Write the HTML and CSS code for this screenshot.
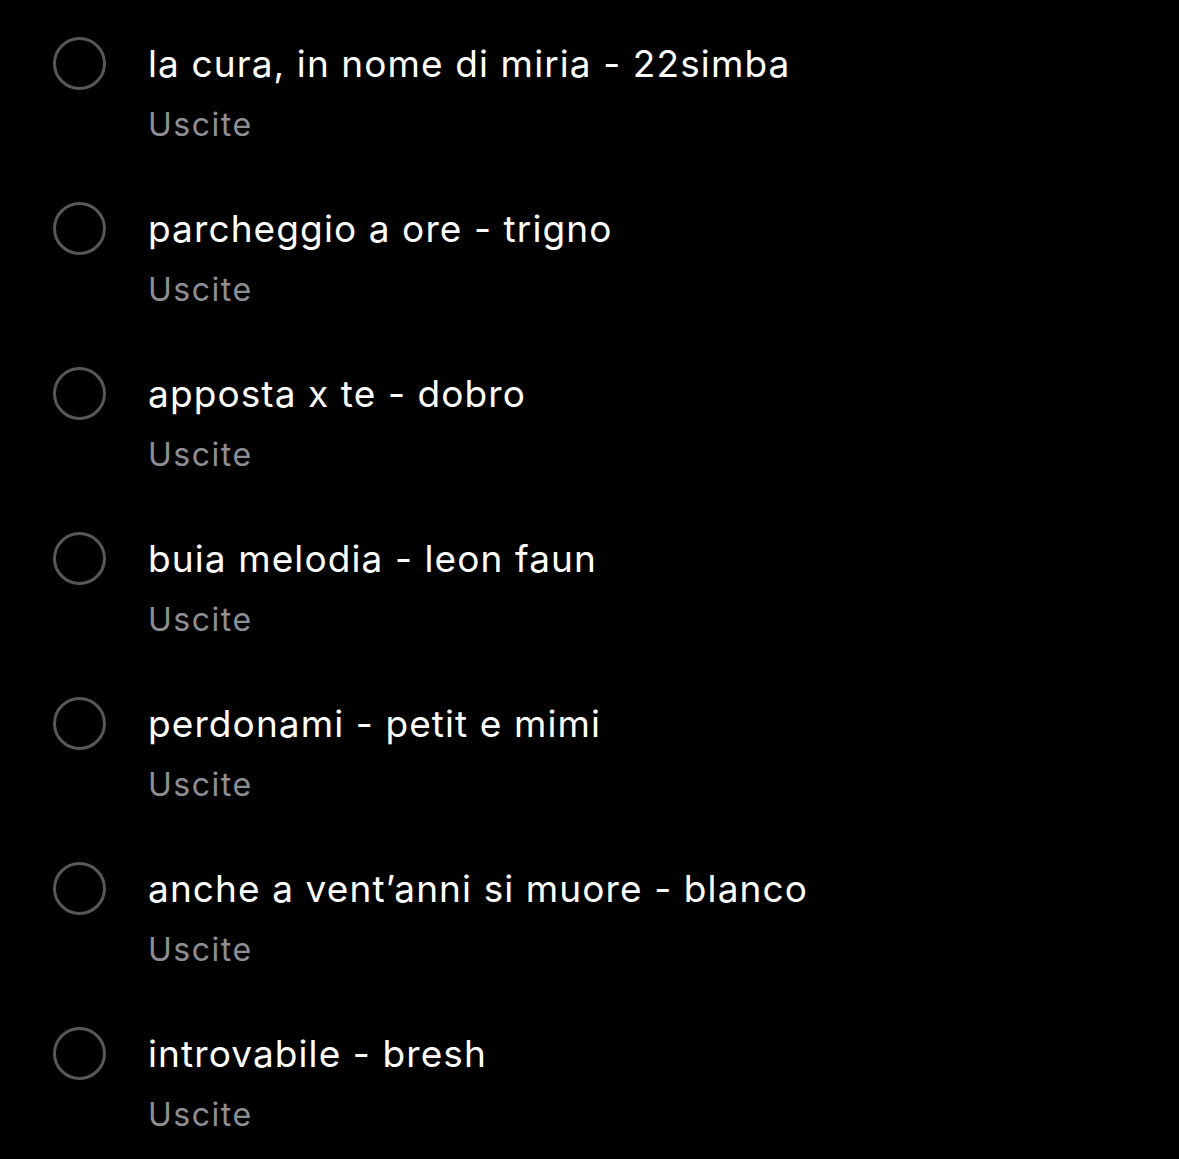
FILE: index.html
```html
<!DOCTYPE html>
<html lang="it">

<head>
  <meta charset="UTF-8">
  <meta name="viewport" content="width=device-width, initial-scale=1.0">
  <title>Promemoria</title>
  <link rel="stylesheet" href="styles.css">
</head>

<body>
  <ul class="reminders">
    <li class="reminder">
      <span class="check"></span>
      <div class="reminder-text">
        <p class="title">la cura, in nome di miria - 22simba</p>
        <p class="list-name">Uscite</p>
      </div>
    </li>
    <li class="reminder">
      <span class="check"></span>
      <div class="reminder-text">
        <p class="title">parcheggio a ore - trigno</p>
        <p class="list-name">Uscite</p>
      </div>
    </li>
    <li class="reminder">
      <span class="check"></span>
      <div class="reminder-text">
        <p class="title">apposta x te - dobro</p>
        <p class="list-name">Uscite</p>
      </div>
    </li>
    <li class="reminder">
      <span class="check"></span>
      <div class="reminder-text">
        <p class="title">buia melodia - leon faun</p>
        <p class="list-name">Uscite</p>
      </div>
    </li>
    <li class="reminder">
      <span class="check"></span>
      <div class="reminder-text">
        <p class="title">perdonami - petit e mimi</p>
        <p class="list-name">Uscite</p>
      </div>
    </li>
    <li class="reminder">
      <span class="check"></span>
      <div class="reminder-text">
        <p class="title">anche a vent’anni si muore - blanco</p>
        <p class="list-name">Uscite</p>
      </div>
    </li>
    <li class="reminder">
      <span class="check"></span>
      <div class="reminder-text">
        <p class="title">introvabile - bresh</p>
        <p class="list-name">Uscite</p>
      </div>
    </li>
  </ul>
</body>

</html>
```

FILE: styles.css
```css
* {
  box-sizing: border-box;
  font-family: Inter, 'Noto Sans', sans-serif;
}

body {
  margin: 0;
  background: #000;
  min-height: 100vh;
}

.reminders {
  list-style: none;
  margin: 0;
  padding: 0 0 0 53px;
}

.reminder {
  display: flex;
  align-items: flex-start;
  gap: 42px;
  height: 165px;
  padding-top: 42px;
}

/* empty round checkbox */
.check {
  flex: none;
  width: 53px;
  height: 53px;
  margin-top: -5px;
  border: 3px solid #58585b;
  border-radius: 50%;
}

.reminder-text p {
  margin: 0;
}

.title {
  color: #fff;
  font-size: 37px;
  line-height: 44px;
  letter-spacing: 1.1px;
}

.list-name {
  margin-top: 20px !important;
  color: #8e8e93;
  font-size: 32px;
  line-height: 38px;
  letter-spacing: 1.5px;
}
```
